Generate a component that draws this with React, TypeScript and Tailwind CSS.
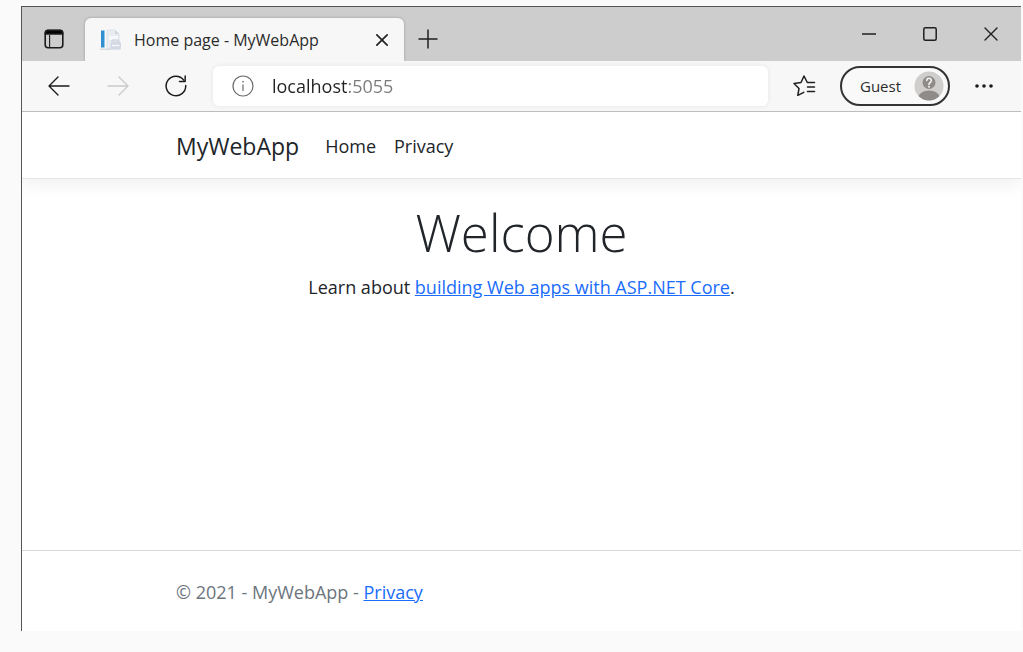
import { useState } from "react";

function TabActionsIcon() {
  return (
    <svg width="20" height="20" viewBox="0 0 20 20" fill="none" stroke="#1b1b1b" strokeWidth="1.6">
      <rect x="1.2" y="1.2" width="17.6" height="17.6" rx="3" />
      <path d="M1.5 5V3.5a2 2 0 0 1 2-2h13a2 2 0 0 1 2 2V5z" fill="#000" />
      <path d="M5.6 6v12.5" strokeWidth="1.1" />
    </svg>
  );
}

function Favicon() {
  return (
    <svg width="22" height="22" viewBox="0 0 22 22">
      <path d="M7 1h8l4 4v15H7z" fill="#e9edf2" stroke="#d8dee5" strokeWidth=".8" />
      <path d="M15 1v4h4z" fill="#cfd6df" />
      <rect x="1" y="1.5" width="3" height="17" fill="#2f8fd0" />
      <rect x="4" y="1.5" width="1" height="17" fill="#8fc4e6" />
      <path d="M0 20.2h11" stroke="#d3d7dc" strokeWidth="1.2" />
      <rect x="9" y="7" width="9" height="4" fill="#f6f8fa" />
      <rect x="10.5" y="12.5" width="10.5" height="8" rx="1.5" fill="#d3d9e4" />
      <path d="M12 16.5h7.500" stroke="#f4f6f9" strokeWidth="1.5" />
      <path d="M12 12.5v-1.500h6.500v1.500" fill="none" stroke="#c5ccd8" strokeWidth="1" />
    </svg>
  );
}

function CloseIcon({ size, weight }: { size: number; weight: number }) {
  return (
    <svg width={size} height={size} viewBox="0 0 14 14" stroke="#1f1f1f" strokeWidth={weight} strokeLinecap="round">
      <path d="M1 1l12 12M13 1L1 13" />
    </svg>
  );
}

function BackIcon() {
  return (
    <svg width="22" height="20" viewBox="0 0 22 20" fill="none" stroke="#1b1b1b" strokeWidth="1.4" strokeLinecap="round" strokeLinejoin="round">
      <path d="M10 1L1 10l9 9M1 10h20" />
    </svg>
  );
}

function ForwardIcon() {
  return (
    <svg width="22" height="20" viewBox="0 0 22 20" fill="none" stroke="#cacaca" strokeWidth="1.4" strokeLinecap="round" strokeLinejoin="round">
      <path d="M12 1l9 9-9 9M21 10H1" />
    </svg>
  );
}

function RefreshIcon() {
  return (
    <svg width="22" height="22" viewBox="0 0 24 24" fill="none" stroke="#1b1b1b" strokeWidth="1.6" strokeLinecap="round" strokeLinejoin="round">
      <path d="M22.600 11.500A10.700 10.700 0 1 1 20.500 5.600" />
      <path d="M22 1v6.200h-6.200" />
    </svg>
  );
}

function InfoIcon() {
  return (
    <svg className="shrink-0" width="22" height="22" viewBox="0 0 22 22" fill="none" stroke="#6b6b6b" strokeWidth="1.2">
      <circle cx="11" cy="11" r="10" />
      <path d="M11 9.500v6.500" />
      <circle cx="11" cy="6.700" r=".5" fill="#6b6b6b" strokeWidth=".8" />
    </svg>
  );
}

function FavoritesIcon() {
  return (
    <svg width="24" height="22" viewBox="0 0 24 22" fill="none" stroke="#1f1f1f" strokeWidth="1.500" strokeLinecap="round" strokeLinejoin="round">
      <path d="M22.500 7.500h-7.200L12 1 9 7.500 2 8.500l5 5-1.200 6.800 6-3" />
      <path d="M15.500 12h7M15.500 16.500h7" />
    </svg>
  );
}

function AvatarIcon() {
  return (
    <svg width="30" height="30" viewBox="0 0 30 30">
      <defs>
        <clipPath id="avatar-edge">
          <circle cx="15" cy="15" r="14.500" />
        </clipPath>
      </defs>
      <g clipPath="url(#avatar-edge)">
        <rect width="30" height="30" fill="#d0cecd" />
        <circle cx="15" cy="11.500" r="6.500" fill="#8f8b89" />
        <ellipse cx="15" cy="26.500" rx="10.500" ry="7" fill="#8f8b89" />
      </g>
      <path d="M12.700 9.500a2.300 2.300 0 1 1 3.500 2q-1.200.7-1.200 1.900" fill="none" stroke="#f2f2f2" strokeWidth="1.600" strokeLinecap="round" />
      <circle cx="15" cy="15.800" r="1" fill="#f2f2f2" />
    </svg>
  );
}

function TabStrip() {
  return (
    <div className="flex h-[54px] items-end bg-[#cdcdcd]">
      <button aria-label="Tab actions" className="flex h-11 w-[63px] items-center justify-center">
        <TabActionsIcon />
      </button>
      <div className="flex h-[43px] w-[319px] items-center rounded-t-md bg-[#f7f7f7] pr-3 pl-[15px] shadow-[0_0_3px_rgba(0,0,0,0.25)]">
        <Favicon />
        <span className="ml-3 flex-1 text-[16px] whitespace-nowrap text-[#2b2b2b]">Home page - MyWebApp</span>
        <button aria-label="Close tab" className="flex size-5 items-center justify-center">
          <CloseIcon size={12} weight={1.9} />
        </button>
      </div>
      <button aria-label="New tab" className="flex h-11 w-12 items-center justify-center">
        <svg width="20" height="20" viewBox="0 0 20 20" stroke="#1f1f1f" strokeWidth="1.500">
          <path d="M10 .5v19M.5 10h19" />
        </svg>
      </button>
      <div className="ml-auto flex self-start">
        <button aria-label="Minimize" className="flex h-[54px] w-[61px] items-center justify-center">
          <svg width="14" height="14" viewBox="0 0 14 14" stroke="#1f1f1f" strokeWidth="1.500">
            <path d="M0 7h14" />
          </svg>
        </button>
        <button aria-label="Maximize" className="flex h-[54px] w-[61px] items-center justify-center">
          <svg width="14" height="14" viewBox="0 0 14 14" fill="none" stroke="#1f1f1f" strokeWidth="1.500">
            <rect x=".8" y=".8" width="12.400" height="12.400" rx="1.500" />
          </svg>
        </button>
        <button aria-label="Close" className="flex h-[54px] w-[61px] items-center justify-center">
          <CloseIcon size={14} weight={1.4} />
        </button>
      </div>
    </div>
  );
}

function Toolbar() {
  const [address, setAddress] = useState("localhost:5055");
  return (
    <div className="relative flex h-[51px] items-center border-b border-[#bdbdbd] bg-[#f7f7f7]">
      <div className="flex pl-[7px]">
        <button aria-label="Back" className="flex h-10 w-[59px] items-center justify-center">
          <BackIcon />
        </button>
        <button aria-label="Forward" className="flex h-10 w-[59px] items-center justify-center">
          <ForwardIcon />
        </button>
        <button aria-label="Refresh" className="flex h-10 w-[58px] items-center justify-center">
          <RefreshIcon />
        </button>
      </div>
      <div className="ml-2 flex h-10 flex-1 items-center gap-[18px] rounded-md bg-white pr-4 pl-[19px] shadow-[0_0_5px_rgba(0,0,0,0.08)]">
        <InfoIcon />
        <input
          aria-label="Address"
          value={address}
          onChange={(event) => setAddress(event.target.value)}
          className="min-w-0 flex-1 bg-[linear-gradient(90deg,#222_76px,#7a7a7a_76px)] bg-clip-text text-[18px] text-transparent caret-black outline-none"
        />
      </div>
      <button aria-label="Favorites" className="mx-6 flex h-10 w-6 items-center justify-center">
        <FavoritesIcon />
      </button>
      <button className="flex h-10 w-[110px] items-center justify-between rounded-full border-2 border-[#333] bg-[#f9f9f9] pr-1 pl-[18px] text-[15px] text-[#2b2b2b]">
        Guest
        <AvatarIcon />
      </button>
      <button aria-label="Settings and more" className="mr-[7px] ml-1 flex h-10 w-[60px] items-center justify-center">
        <svg width="18" height="4" viewBox="0 0 18 4" fill="#1b1b1b">
          <circle cx="2" cy="2" r="1.800" />
          <circle cx="9" cy="2" r="1.800" />
          <circle cx="16" cy="2" r="1.800" />
        </svg>
      </button>
    </div>
  );
}

export default function App() {
  return (
    <div className="flex min-h-screen flex-col bg-[#fafafa] pt-[6px] pr-[2px] pb-[21px] pl-[21px] font-['Open_Sans','Noto_Sans',sans-serif]">
      <div className="flex flex-1 flex-col overflow-clip border-t border-l border-[#555] bg-white">
        <TabStrip />
        <Toolbar />
        <header className="border-b border-[#e5e5e8] shadow-[0_6px_16px_rgba(0,0,0,0.06)]">
          <nav className="flex h-[66px] items-center px-[154px] pt-[2px] text-[#212529]">
            <a href="#home" className="text-[23px]">MyWebApp</a>
            <a href="#home" className="ml-[26px] text-[18px]">Home</a>
            <a href="#privacy" className="ml-[18px] text-[18px]">Privacy</a>
          </nav>
        </header>
        <main className="flex-1 pt-[18px] text-center text-[#212529]">
          <h1 className="text-[51px] leading-[70px] font-light">Welcome</h1>
          <p className="mt-[6px] text-[18px] leading-7">
            Learn about{" "}
            <a href="#docs" className="text-[#1a6cfd] underline">building Web apps with ASP.NET Core</a>.
          </p>
        </main>
        <footer className="border-t border-[#d5dade] px-[154px] pt-[2px] text-[18px] leading-[78px] text-[#6c757d]">
          © 2021 - MyWebApp - <a href="#privacy" className="text-[#1a6cfd] underline">Privacy</a>
        </footer>
      </div>
    </div>
  );
}
